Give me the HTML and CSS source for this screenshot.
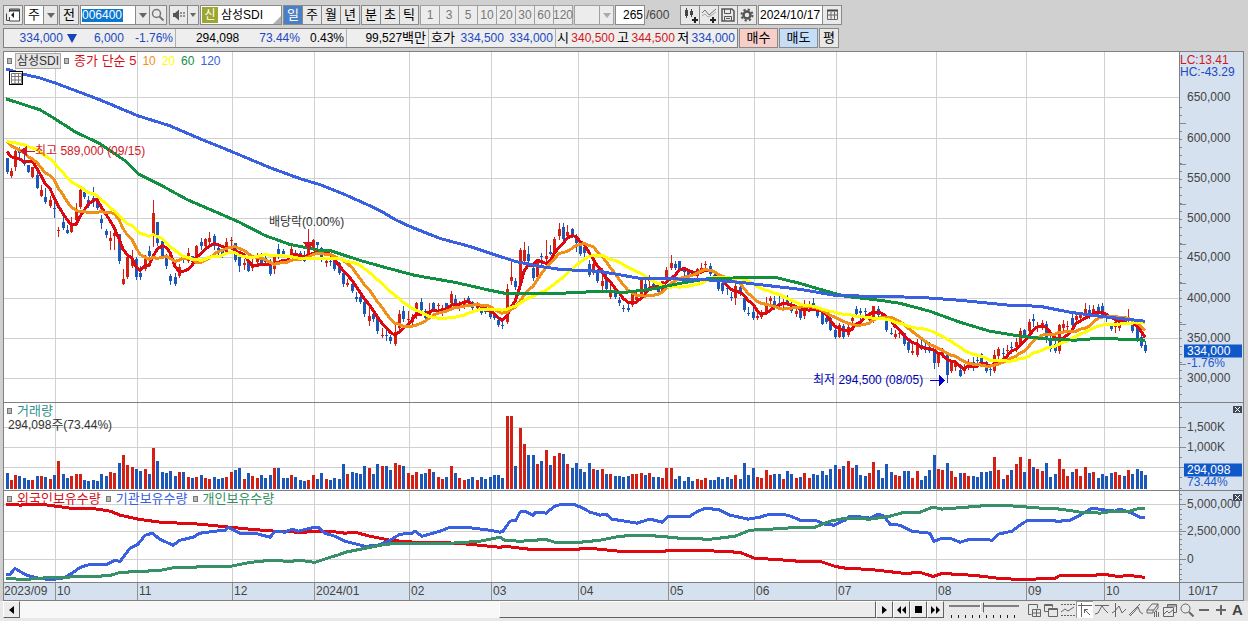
FILE: index.html
```html
<!DOCTYPE html>
<html lang="ko">
<head>
  <meta charset="UTF-8" />
  <meta name="viewport" content="width=device-width, initial-scale=1.0"/>
  <title>삼성SDI - 종합차트</title>
  <link rel="stylesheet" href="styles.css">
</head>
<body>

  <!-- Toolbar -->
  <div class="toolbar">
    <button class="btn" aria-label="패널"><svg width="14" height="14" viewBox="0 0 14 14"><path d="M3.5 4V1h10v12h-10V9" fill="#fff" stroke="#444"/><path d="M3.5 2.5h10" stroke="#444" stroke-width="2"/><path d="M8 4v6L5 7z" fill="#222"/><path d="M0.5 5.5v7h3" fill="none" stroke="#444"/></svg></button>
    <div class="group gap-s">
      <button class="btn white">주</button>
      <button class="btn arrow" aria-label="종목구분"><i class="tri"></i></button>
    </div>
    <button class="btn gap-s">전</button>
    <div class="group gap-s">
      <input type="text" class="code" value="006400" aria-label="종목코드">
      <button class="btn arrow" aria-label="종목 목록"><i class="tri"></i></button>
      <button class="btn search" aria-label="검색"><svg width="14" height="14" viewBox="0 0 14 14" fill="none" stroke="#777"><circle cx="5.5" cy="5.5" r="4" stroke-width="1.5"/><path d="M8.5 8.5l4 4" stroke-width="2"/></svg></button>
    </div>
    <div class="group gap-m">
      <button class="btn speaker" aria-label="소리"><svg width="14" height="12" viewBox="0 0 14 12"><path d="M1 4h2l4-3.5v11L3 8H1z" fill="#555"/><path d="M9 3v6M12 3v6" stroke="#777" stroke-width="1.5" stroke-dasharray="2 1"/></svg></button>
      <button class="btn arrow slim" aria-label="소리 설정"><i class="tri"></i></button>
    </div>
    <div class="stock"><span class="credit">신</span><span>삼성SDI</span><i class="corner"></i></div>
    <div class="group gap-s">
      <button class="btn active">일</button>
      <button class="btn">주</button>
      <button class="btn">월</button>
      <button class="btn">년</button>
    </div>
    <div class="group gap-s">
      <button class="btn">분</button>
      <button class="btn">초</button>
      <button class="btn">틱</button>
    </div>
    <div class="group gap-s">
      <button class="btn" disabled>1</button>
      <button class="btn" disabled>3</button>
      <button class="btn" disabled>5</button>
      <button class="btn" disabled>10</button>
      <button class="btn" disabled>20</button>
      <button class="btn" disabled>30</button>
      <button class="btn" disabled>60</button>
      <button class="btn" disabled>120</button>
    </div>
    <div class="group gap-s">
      <button class="btn unit" disabled aria-label="분 단위"></button>
      <button class="btn arrow" disabled aria-label="분 단위 목록"><i class="tri"></i></button>
    </div>
    <input type="text" class="count" value="265" aria-label="봉 개수">
    <span class="total">/600</span>
    <div class="group tight">
      <button class="btn" aria-label="차트 추가"><svg width="15" height="15" viewBox="0 0 15 15"><path d="M3.5 0v10M8.5 1v8" stroke="#444"/><path d="M2 2h3v6H2zM7 3h3v4H7z" fill="#444"/><path d="M9 12h6M12 9v6" stroke="#222" stroke-width="2"/></svg></button>
      <button class="btn" aria-label="지표 추가"><svg width="15" height="15" viewBox="0 0 15 15" fill="none"><path d="M0 5l3-3 4 5 7-6" stroke="#777"/><path d="M0 8l3-2 3 3 4-2 4-3" stroke="#aaa"/><path d="M8 12h6M11 9v6" stroke="#222" stroke-width="2"/></svg></button>
      <button class="btn" aria-label="저장"><svg width="14" height="14" viewBox="0 0 14 14" fill="none" stroke="#555"><path d="M1 1h10l2 2v10H1z" stroke-width="1.5"/><path d="M3.5 1v4.5h6V1M3.500 13V8.5h7V13M5 10.5h4"/></svg></button>
      <button class="btn" aria-label="설정"><svg width="14" height="14" viewBox="0 0 14 14" fill="none" stroke="#555"><circle cx="7" cy="7" r="3.5" stroke-width="2.5"/><circle cx="7" cy="7" r="5.5" stroke-width="2" stroke-dasharray="2.2 2.12"/></svg></button>
    </div>
    <div class="group gap-s">
      <input type="text" class="date" value="2024/10/17" aria-label="기준일">
      <button class="btn" aria-label="달력"><svg width="13" height="12" viewBox="0 0 13 12" fill="none" stroke="#666"><path d="M1 1.5h11" stroke="#444" stroke-width="2"/><path d="M1.5 2v8.5h10V2M5 3v7M8.5 3v7M2 6h9" /></svg></button>
    </div>
  </div>

  <!-- Quote bar -->
  <div class="quote">
    <div class="cells">
      <div class="cell c1 down"><span>334,000</span><i class="fall"></i><span>6,000</span><span>-1.76%</span></div>
      <div class="cell c2"><span>294,098</span><span class="down">73.44%</span><span>0.43%</span></div>
      <div class="cell c3"><span>99,527<b>백만</b></span></div>
      <div class="cell c4"><b>호가</b><span class="down">334,500</span><span class="down">334,000</span></div>
      <div class="cell c5"><b>시</b><span class="up">340,500</span><b>고</b><span class="up">344,500</span><b>저</b><span class="down">334,000</span></div>
    </div>
    <button class="btn buy">매수</button>
    <button class="btn sell">매도</button>
    <button class="btn avg">평</button>
  </div>

  <!-- Charts -->
  <div class="charts">
    <div class="panel price">
      <div class="plot">
        <svg id="priceChart" viewBox="4 52 1175 351" preserveAspectRatio="none"></svg>
        <div class="legend">
          <i class="box"></i><span class="name">삼성SDI</span><i class="box"></i>
          <span class="ma5">종가 단순 5</span><span class="ma10">10</span><span class="ma20">20</span><span class="ma60">60</span><span class="ma120">120</span>
        </div>
        <button class="grid-btn" aria-label="수치조회"><svg width="11" height="11" viewBox="0 0 11 11" fill="none" stroke="#777"><path d="M.5.5h10v10H.5zM.5 3.5h10M.5 7h10M4 .5v10M7.5.5v10"/></svg></button>
        <div id="priceNotes"></div>
      </div>
      <div class="axis" id="priceAxis">
        <div class="range"><span class="up">LC:13.41</span><span class="down">HC:-43.29</span></div>
      </div>
    </div>

    <div class="panel volume">
      <div class="plot">
        <svg id="volumeChart" viewBox="4 404 1175 86" preserveAspectRatio="none"></svg>
        <div class="legend"><i class="box"></i><span class="vol-name">거래량</span></div>
        <div class="vol-now">294,098<b>주</b>(73.44%)</div>
      </div>
      <div class="axis" id="volumeAxis"><button class="close" aria-label="거래량 닫기"><svg width="5" height="5" viewBox="0 0 5 5" stroke="#fff"><path d="M0 0l5 5M5 0L0 5"/></svg></button></div>
    </div>

    <div class="panel holding">
      <div class="plot">
        <svg id="holdingChart" viewBox="4 491 1175 91" preserveAspectRatio="none"></svg>
        <div class="legend">
          <i class="box"></i><span class="foreign">외국인보유수량</span>
          <i class="box"></i><span class="inst">기관보유수량</span>
          <i class="box"></i><span class="person">개인보유수량</span>
        </div>
      </div>
      <div class="axis" id="holdingAxis"><button class="close" aria-label="보유수량 닫기"><svg width="5" height="5" viewBox="0 0 5 5" stroke="#fff"><path d="M0 0l5 5M5 0L0 5"/></svg></button></div>
    </div>

    <div class="dates">
      <div class="months" id="months"></div>
      <div class="last">10/17</div>
    </div>
  </div>

  <!-- Scroll bar and drawing tools -->
  <div class="bottom">
    <button class="scroll-btn" aria-label="왼쪽"><svg width="5" height="8" viewBox="0 0 5 8"><path d="M5 0v8L0 4z"/></svg></button>
    <div class="track"><div class="thumb"></div></div>
    <button class="scroll-btn" aria-label="오른쪽"><svg width="5" height="8" viewBox="0 0 5 8"><path d="M0 0v8l5-4z"/></svg></button>
    <button class="scroll-btn" aria-label="뒤로"><svg width="9" height="8" viewBox="0 0 9 8"><path d="M4 0v8L0 4zM9 0v8L5 4z"/></svg></button>
    <button class="scroll-btn" aria-label="정지"><svg width="7" height="7" viewBox="0 0 7 7"><path d="M0 0h7v7H0z"/></svg></button>
    <button class="scroll-btn" aria-label="앞으로"><svg width="9" height="8" viewBox="0 0 9 8"><path d="M0 0v8l4-4zM5 0v8l4-4z"/></svg></button>
    <input type="range" class="speed" min="0" max="100" value="47" aria-label="속도">
    <div class="tools">
      <button aria-label="창 추가"><svg viewBox="0 0 14 14"><path d="M4.5 11.5h-3v-10h9v4"/><path d="M5.500 6.500h8v7h-8zM5.500 10h8M9.500 6.500v7"/></svg></button>
      <button aria-label="창 겹치기"><svg viewBox="0 0 14 14"><path d="M4.500 8.500h-4v-7h8v3"/><path d="M4.500 5.500h9v8h-9z"/><path d="M5 6.500h8M1 2.500h8"/></svg></button>
      <button aria-label="영역"><svg viewBox="0 0 14 14"><path d="M0 1.500h14M0 12.500h14" stroke-dasharray="2 1"/><path d="M0 9l4-3 3 2 6-4"/></svg></button>
      <button class="on" aria-label="십자선"><svg viewBox="0 0 14 14"><path d="M0 2.500h14M3.500 0v14M6 6l6 6M6.500 10V6.500H10"/></svg></button>
      <button aria-label="수평선"><svg viewBox="0 0 14 14"><path d="M0 2.500h14M0 11l3-1 4-7 3 4 3 3"/></svg></button>
      <button aria-label="수직선"><svg viewBox="0 0 14 14"><path d="M3.500 0v14M0 10l3-2 4-5 3 7 4-4"/></svg></button>
      <button aria-label="추세선"><svg viewBox="0 0 14 14"><path d="M0 12L11 1M1 13l5-5 3-4 2 5 3 2"/></svg></button>
      <button aria-label="지우개"><svg viewBox="0 0 14 14"><path d="M1 7l5-6h6L8 7zM1 7v3h6V7M8 10l4-5V1M8.500 9v5M10.500 8v6M12.500 9v5"/></svg></button>
      <button aria-label="차트 복사"><svg viewBox="0 0 14 14"><path d="M4.500 4V1.500h9v8h-3M4 3h9"/><path d="M.5 4.500h10v9H.5zM1 11l3-3 2 2 4-3"/></svg></button>
      <button aria-label="돋보기"><svg viewBox="0 0 14 14"><circle cx="5.500" cy="5.500" r="4.500"/><path d="M9 9l4.500 4.500" stroke-width="2"/></svg></button>
      <button aria-label="축소"><svg viewBox="0 0 14 14"><path d="M2 7h10" stroke-width="2"/></svg></button>
      <button aria-label="확대"><svg viewBox="0 0 14 14"><path d="M2 7h10M7 2v10" stroke-width="2"/></svg></button>
      <button class="letter">A</button>
    </div>
  </div>

  <script src="script.js"></script>
</body>
</html>
```
FILE: styles.css
```css
* {
  box-sizing: border-box;
}

body {
  margin: 0;
  height: 100vh;
  display: flex;
  flex-direction: column;
  background: #d0d0d0;
  color: #000;
  font: 12px/16px "Liberation Sans", "Noto Sans CJK KR", sans-serif;
  white-space: nowrap;
  overflow: hidden;
}

button,
input {
  font: inherit;
  color: inherit;
  margin: 0;
  padding: 0;
  border-radius: 0;
}

i,
b {
  font-style: normal;
  font-weight: normal;
}

/* toolbar */
.toolbar {
  display: flex;
  align-items: center;
  height: 20px;
  margin: 5px 0 3px 3px;
}

.group {
  display: flex;
}

.btn {
  display: flex;
  align-items: center;
  justify-content: center;
  width: 20px;
  height: 20px;
  border: 1px solid #8a8a8a;
  background: #e9e9e9;
}

.group > * + * {
  margin-left: -1px;
}

.gap-s {
  margin-left: 1px;
}

.gap-m {
  margin-left: 2px;
}

.white {
  background: #fff;
}

.arrow {
  width: 15px;
}

.slim {
  width: 12px;
}

.search {
  width: 18px;
}

.speaker {
  width: 19px;
}

.tri {
  border: 4px solid transparent;
  border-top: 5px solid #666;
  border-bottom: 0;
}

.slim .tri {
  border-width: 4px 3px 0;
}

.code,
.count,
.date {
  height: 20px;
  border: 1px solid #8a8a8a;
  background: #fff;
}

.code {
  width: 56px;
  padding-left: 1px;
  color: #fff;
  background: linear-gradient(#0a78d0, #0a78d0) 1px 3px / 41px 13px no-repeat #fff;
}

.stock {
  position: relative;
  display: flex;
  align-items: center;
  gap: 3px;
  width: 82px;
  height: 20px;
  margin-left: 1px;
  padding-left: 1px;
  border: 1px solid #8a8a8a;
  background: #fff;
}

.credit {
  width: 16px;
  height: 16px;
  background: #9da630;
  color: #fff;
  text-align: center;
}

.corner {
  position: absolute;
  right: 0;
  bottom: 0;
  border: 4px solid #b0b0b0;
  border-top-color: transparent;
  border-left-color: transparent;
}

.active {
  background: #4a7fc4;
  color: #fff;
}

.btn:disabled {
  color: #777;
  background: #ececec;
  border-color: #a0a0a0;
}

.btn:disabled .tri {
  border-top-color: #aaa;
}

.unit {
  width: 26px;
}

.count {
  width: 30px;
  margin-left: 1px;
  padding-right: 1px;
  text-align: right;
}

.total {
  width: 35px;
  padding-left: 1px;
  color: #444;
}

.date {
  width: 65px;
  padding-left: 1px;
}

/* quote bar */
.quote {
  display: flex;
  height: 20px;
  margin: 0 0 3px 3px;
}

.cells {
  display: flex;
  border: 1px solid #808080;
  background: #eee;
  margin-right: 1px;
}

.cell {
  display: flex;
  align-items: center;
  justify-content: flex-end;
  padding-right: 2px;
  border-right: 1px solid #b0b0b0;
}

.cell b,
.vol-now b,
.quote .btn,
.toolbar .btn:not(:disabled) {
  font-size: 13px;
}

.cell:last-child {
  border-right: 0;
}

.c1 {
  width: 172px;
}

.fall {
  margin: 0 17px 0 4px;
  border: 5px solid transparent;
  border-top: 9px solid #1845b8;
  border-bottom: 0;
}

.c1 span:last-child {
  margin-left: 11px;
}

.c2 {
  width: 171px;
  gap: 10px;
}

.c2 .down {
  margin-left: 10px;
}

.c3 {
  width: 82px;
}

.c4 {
  width: 127px;
  justify-content: space-between;
  padding-left: 2px;
}

.c5 {
  width: 181px;
  justify-content: space-between;
  padding-left: 1px;
}

.up {
  color: #d01818;
}

.down {
  color: #1c48c0;
}

.quote .buy,
.quote .sell {
  width: 39px;
  margin-right: 1px;
}

.buy {
  background: #f8cfc8;
}

.sell {
  background: #c4def8;
}

/* charts */
.charts {
  flex: 1;
  min-height: 0;
  display: flex;
  flex-direction: column;
  margin: 0 4px 0 3px;
  border: 1px solid #808080;
  background: #fff;
}

.panel {
  display: flex;
  min-height: 0;
  border-bottom: 1px solid #808080;
}

.price {
  flex: 352 1 0;
}

.volume {
  flex: 87 1 0;
}

.holding {
  flex: 92 1 0;
}

.plot {
  position: relative;
  flex: 1;
  min-width: 0;
}

.plot > svg {
  position: absolute;
  width: 100%;
  height: 100%;
  shape-rendering: crispEdges;
}

.axis {
  position: relative;
  width: 64px;
  border-left: 1px solid #808080;
  background: #d6e1ef;
  color: #444;
}

.axis > svg {
  position: absolute;
  width: 8px;
  height: 100%;
  shape-rendering: crispEdges;
}

.axis-label,
.tag,
.change {
  position: absolute;
  left: 7px;
  line-height: 12px;
  transform: translateY(-50%);
}

.tag {
  left: 4px;
  right: 1px;
  padding-left: 3px;
  line-height: 13px;
  background: #1058c8;
  color: #fff;
}

.change {
  color: #1c58c8;
}

.range {
  display: flex;
  flex-direction: column;
  line-height: 12px;
  padding-top: 2px;
}

.close {
  position: absolute;
  top: 3px;
  right: 1px;
  z-index: 1;
  display: flex;
  align-items: center;
  justify-content: center;
  width: 9px;
  height: 7px;
  border: 0;
  background: #404858;
}

.legend {
  position: absolute;
  top: 1px;
  left: 3px;
  display: flex;
  align-items: center;
  gap: 5px;
  font-size: 13px;
  line-height: 14px;
}

.box {
  width: 5px;
  height: 6px;
  border: 1px solid #777;
  background: #bbb;
}

.name {
  margin: 0 -2px;
  padding: 0 1px;
  border: 1px solid #aaa;
  background: #e4e4e4;
  color: #333;
  font-size: 12px;
}

.ma5,
.foreign {
  color: #d80c18;
}

.ma10,
.ma20,
.ma60,
.ma120 {
  margin-left: 1px;
  font-size: 12px;
}

.ma10 {
  color: #f09018;
}

.ma20 {
  color: #ffff00;
}

.ma60 {
  color: #109040;
}

.ma120 {
  color: #3860e0;
}

.vol-name {
  color: #309090;
}

.inst {
  color: #3860e0;
}

.person {
  color: #309060;
}

.vol-now {
  position: absolute;
  top: 14px;
  left: 4px;
  color: #333;
}

.grid-btn {
  position: absolute;
  top: 19px;
  left: 5px;
  display: flex;
  align-items: center;
  justify-content: center;
  width: 14px;
  height: 14px;
  border: 1px solid #000;
  background: #fff;
}

.note {
  position: absolute;
  transform: translateY(-50%);
}

.high {
  color: #d01828;
}

.low {
  color: #0000b0;
}

.dividend {
  color: #333;
}

.dates {
  display: flex;
  height: 17px;
  background: #d6e1ef;
  color: #444;
}

.months {
  position: relative;
  flex: 1;
}

.month {
  position: absolute;
  height: 17px;
  padding-left: 1px;
  border-left: 1px solid #909090;
}

.month:first-child {
  padding-left: 0;
  border-left: 0;
}

.last {
  width: 64px;
  padding-left: 8px;
  border-left: 1px solid #808080;
}

/* bottom bar */
.bottom {
  display: flex;
  height: 20px;
  padding: 0 2px 3px 3px;
  background: #e8e8e8;
}

.scroll-btn {
  display: flex;
  align-items: center;
  justify-content: center;
  width: 17px;
  height: 17px;
  border: 1px solid #fff;
  border-right-color: #606060;
  border-bottom-color: #606060;
  background: #ececec;
}

.track {
  flex: 1;
  display: flex;
  justify-content: flex-end;
  background: #f8f8f8;
}

.thumb {
  width: 44%;
  border: 1px solid #fff;
  border-right-color: #606060;
  border-bottom-color: #606060;
  background: #ececec;
}

.speed {
  appearance: none;
  width: 70px;
  height: 17px;
  margin: 0 6px 0 5px;
  background:
    linear-gradient(#808080, #808080) 0 4px / 100% 2px no-repeat,
    repeating-linear-gradient(90deg, transparent 0 2px, #222 2px 3px, transparent 3px 7px) 0 14px / 100% 3px no-repeat;
}

.speed::-webkit-slider-thumb {
  appearance: none;
  width: 4px;
  height: 11px;
  margin-top: -5px;
  border: 1px solid #fff;
  border-right-color: #606060;
  background: #ddd;
}

.tools {
  display: flex;
}

.tools button {
  display: flex;
  align-items: center;
  justify-content: center;
  width: 17px;
  height: 17px;
  border: 0;
  background: none;
}

.tools svg {
  flex: none;
  width: 14px;
  height: 14px;
  fill: none;
  stroke: #666;
}

.tools .on {
  background: #fff;
  border: 1px solid #999;
  border-right: 0;
  border-bottom: 0;
}

.tools .letter {
  color: #444;
  font: bold 15px/17px "Liberation Sans", sans-serif;
}
```
FILE: script.js
```js
const NS = 'http://www.w3.org/2000/svg';
const RED = '#d42014';
const BLUE = '#1c58b8';

// [direction, high, body top, body bottom, low] for every daily bar
const bars = `
b158,158,172,173 r168,171,176,177 r150,151,167,170 b147,151,153,156 b155,160,164,165 b165,165,172,172 r167,167,177,177 b173,175,188,188
r185,190,196,196 b188,197,202,203 r196,200,206,207 b202,208,209,217 r227,231,232,237 b217,222,228,230 b225,230,234,234 r217,223,233,233
r203,209,220,221 r188,190,207,208 b189,192,197,198 b196,200,206,207 b187,198,201,206 b197,200,208,209 b215,219,223,228 b229,232,236,238
r232,239,242,250 r229,234,237,250 b235,235,262,264 r270,280,285,285 r257,258,278,279 r251,259,267,268 b258,260,278,280 b267,274,278,280
r256,258,270,271 b247,252,257,258 r200,213,236,247 b222,222,244,246 b239,242,257,258 b255,257,267,269 b275,277,282,285 b274,278,285,286
r265,268,277,278 b257,259,260,263 r249,254,262,263 b257,257,263,263 r246,247,263,263 b239,243,247,250 r239,240,247,249 r233,239,243,248
b235,237,247,250 b246,249,254,256 b250,252,255,258 r239,243,254,255 r238,241,242,250 b244,244,261,262 b256,258,267,272 r260,264,266,270
b262,263,272,272 r260,265,269,271 r254,260,263,265 b254,259,264,266 b257,259,263,266 b260,264,275,276 r258,258,270,274 b245,250,255,259
b250,252,256,257 b256,258,259,261 r247,250,256,256 b251,255,257,260 b252,254,259,260 b252,256,262,262 r248,250,259,260 r240,241,250,251
b243,243,246,248 b248,249,261,262 r259,262,264,267 b258,262,263,266 b260,262,270,271 b263,264,274,275 b272,274,285,287 r280,284,286,287
b284,285,292,293 b293,298,300,302 b295,298,303,304 b301,303,315,317 r309,317,322,326 b313,315,320,322 b318,319,332,334 r329,336,337,338
b328,336,337,341 b336,338,342,344 r325,333,345,346 r311,315,329,330 b307,312,320,322 r312,320,321,323 r315,318,323,326 r303,304,317,319
b299,303,311,312 b310,312,319,320 r304,312,317,318 b303,304,311,312 r304,306,307,312 r306,309,312,316 b304,304,310,311 r292,295,304,305
b296,300,304,305 r302,305,307,311 r299,303,307,309 b297,299,304,305 b302,303,309,310 r303,306,309,312 b306,308,314,315 b308,308,313,314
b310,312,318,319 b313,315,319,320 b319,321,326,327 b322,326,327,329 r285,290,323,324 r263,278,282,285 b279,282,288,290 r249,251,283,285
r243,251,262,265 b247,255,262,264 b264,269,279,281 r261,262,278,279 b254,257,258,268 r241,257,260,264 b246,253,255,255 r238,240,254,256
r223,229,237,240 b223,227,240,242 r225,233,237,240 b228,229,237,238 b235,237,244,252 b242,243,255,256 b243,248,254,257 b261,265,276,277
r259,265,274,275 b270,272,282,283 r269,282,287,293 b275,278,290,292 r286,292,298,299 b287,292,298,299 b298,301,304,306 b306,309,310,312
b304,309,311,312 r293,294,306,307 r290,297,301,303 r281,281,296,298 b280,285,293,295 r276,280,282,287 b280,285,287,289 b285,288,293,294
r282,282,292,294 r268,271,281,283 r256,264,269,270 b262,265,269,270 b262,262,270,272 b268,270,273,276 b271,271,277,278 b271,273,275,277
r269,270,277,282 r264,269,272,274 r262,265,266,271 b264,267,275,276 b273,276,281,282 b281,283,290,291 b281,284,292,294 b285,289,290,295
b293,298,299,301 r284,287,299,305 b286,288,295,296 b297,299,311,312 b308,314,315,316 b309,313,319,320 r312,317,319,320 r311,314,318,319
r298,305,314,315 r297,299,302,306 b297,302,306,310 b296,304,306,309 r300,303,306,308 b296,299,304,306 b303,305,312,313 r308,312,315,317
b309,311,319,320 r301,305,317,319 r302,305,308,310 b299,304,307,308 b309,310,317,318 b312,313,325,325 b314,319,323,324 b317,319,331,331
b328,331,338,339 r324,326,338,338 b325,327,338,339 r323,328,336,337 r318,319,322,325 b307,310,315,317 b309,312,314,321 b309,312,313,315
r314,316,321,324 r307,307,318,323 b307,310,316,317 b314,315,317,320 b317,317,331,332 b329,334,335,335 r331,335,338,339 r331,334,335,338
b334,334,345,346 b342,343,351,353 r343,352,354,355 r340,344,356,357 b341,346,348,350 b344,348,349,353 b343,348,352,353 b350,351,364,369
r354,355,364,367 r349,353,356,358 b353,354,376,383 r363,364,372,373 r362,363,368,371 b365,371,377,377 r365,368,372,374 r360,364,368,370
b358,363,365,371 b357,361,362,366 b354,355,363,364 b362,363,372,373 b368,370,371,376 r351,356,372,373 r348,350,357,359 b349,354,355,358
r346,351,352,356 b343,348,349,354 r339,343,348,352 r329,332,345,347 b330,331,336,338 r320,323,332,337 b315,320,322,327 r323,328,329,332
r321,324,327,330 b322,325,341,343 b335,341,350,352 b340,345,352,353 r325,326,352,354 r321,325,329,333 r322,327,328,333 b315,319,326,328
r313,317,321,324 r313,315,319,321 r304,310,317,319 b306,311,318,319 r306,310,314,316 b305,308,313,318 b304,307,316,318 b314,318,319,322
b324,326,330,331 r317,323,328,333 r320,322,329,331 b317,318,323,324 r310,320,321,324 b325,325,332,333 b328,328,339,342 b335,338,347,348
b342,346,352,353`.trim().split(/\s+/).map(s => [s[0], ...s.slice(1).split(',').map(Number)]);

const volumes = [
  15,8,13,12,10,8,8,12,12,11,9,13,27,14,10,12,14,14,8,7,8,7,14,12,16,15,25,33,23,21,
  19,17,19,14,40,27,16,15,17,12,16,16,11,10,11,13,10,9,11,9,10,11,16,18,20,9,15,12,10,13,
  10,13,20,20,10,10,13,11,8,7,8,13,9,15,9,8,10,9,24,14,16,15,14,22,20,14,24,22,22,18,
  25,23,22,15,13,16,14,15,19,16,11,9,11,22,15,10,8,9,11,8,11,9,11,13,13,10,72,72,22,60,
  44,33,33,24,27,38,23,32,35,34,24,20,25,19,16,25,19,18,19,14,14,12,12,11,12,14,14,15,13,15,
  11,11,10,20,20,9,12,7,11,7,9,8,10,8,8,11,9,11,9,13,9,25,13,20,11,10,18,13,14,14,
  9,17,14,10,11,15,10,14,13,17,13,19,23,19,22,27,20,23,13,12,15,26,18,10,24,16,13,12,17,17,
  10,17,8,12,18,33,19,18,25,17,11,15,15,12,12,11,16,16,17,31,18,9,13,18,24,31,16,29,21,19,
  17,25,11,14,29,19,12,16,19,12,21,15,16,10,14,12,15,16,13,12,18,14,19,17,13
];

const ma60 = '6,99 40,110 55,119 75,132 100,144 125,161 138,174 160,185 187,200 215,212 240,223 265,236 290,245 320,251 330,251 360,261 385,268 415,276 455,283 490,291 505,294 560,294 600,292 625,293 650,290 680,284 710,279 775,278 800,284 820,290 845,297 880,301 900,304 930,312 960,323 990,332 1020,337 1050,340 1075,341 1100,339 1145,341';
const ma120 = '6,69 22,74 40,78 55,83 100,100 138,116 170,126 200,139 232,152 270,168 300,179 320,185 345,195 365,204 380,211 395,220 410,227 440,239 470,247 500,257 515,262 540,267 560,270 600,272 640,279 700,280 740,283 800,290 835,296 870,297 920,298 960,301 1010,306 1040,307 1070,313 1100,317 1145,322';

const foreign = '6,504 20,505 40,504 55,506 70,508 90,508 110,511 120,515 138,519 160,522 200,524 230,527 250,529 275,531 300,532 330,531 345,533 355,532 370,536 390,540 415,542 440,542 470,544 500,547 505,546 530,549 560,549 575,549 590,548 620,551 650,551 700,550 740,552 755,558 775,559 800,561 820,561 835,566 847,568 870,569 905,573 920,572 933,576 942,573 975,575 1000,578 1020,579 1055,578 1060,575 1090,575 1105,574 1118,576 1130,575 1145,577';
const inst = '6,574 10,574 15,568 20,571 27,575 40,578 50,579 62,578 72,573 80,567 90,564 107,564 115,560 120,561 130,548 138,544 145,535 152,533 160,539 173,545 180,540 193,537 200,533 215,531 225,530 228,527 240,533 255,533 270,537 275,531 285,532 292,529 298,531 310,528 318,527 325,533 335,536 345,541 365,546 378,545 390,540 400,534 412,533 415,531 422,536 440,531 450,527 465,527 490,530 500,532 503,531 510,521 516,520 520,512 525,511 533,515 536,512 546,513 555,506 563,504 573,504 583,508 590,512 600,515 606,514 612,519 625,521 637,523 650,519 662,522 668,516 690,516 698,511 706,508 720,510 730,515 748,519 760,517 770,514 788,515 800,520 815,520 825,524 834,525 845,520 850,516 862,517 870,518 878,514 884,516 890,524 900,525 912,531 930,533 934,541 942,538 950,538 960,542 970,539 985,539 992,540 998,534 1012,531 1020,525 1028,520 1060,521 1070,520 1080,515 1092,508 1105,510 1115,511 1120,509 1132,513 1140,517 1145,517';
const person = '6,578 25,579 50,577 95,576 110,575 120,572 160,570 175,567 230,566 250,562 270,560 290,561 300,560 315,562 330,557 340,554 345,552 360,549 380,545 395,543 450,543 480,541 500,537 505,540 520,541 535,540 545,539 555,542 580,542 600,540 620,536 640,535 660,536 680,538 710,539 735,536 750,530 770,529 800,527 815,527 830,521 845,518 870,519 890,516 905,512 920,512 933,507 942,509 955,508 980,506 990,505 1015,506 1040,508 1060,509 1080,512 1100,513 1115,511 1130,511 1140,508 1145,508';

const months = [
  [4, '2023/09'], [55, '10'], [137, '11'], [232, '12'], [314, '2024/01'], [409, '02'], [491, '03'],
  [578, '04'], [668, '05'], [754, '06'], [836, '07'], [936, '08'], [1026, '09'], [1104, '10']
];

const panels = {
  price: { top: 52, height: 351, step: 8, labels: [[97, '650,000'], [138, '600,000'], [178, '550,000'], [218, '500,000'], [258, '450,000'], [299, '400,000'], [339, '350,000'], [379, '300,000']], tag: [352, '334,000'], change: [364, '-1.76%'] },
  volume: { top: 404, height: 86, step: 10, labels: [[428, '1,500K'], [448, '1,000K'], [468, '']], tag: [471, '294,098'], change: [483, '73.44%'] },
  holding: { top: 491, height: 91, step: 5, labels: [[504, '5,000,000'], [531, '2,500,000'], [559, '0']] }
};

const barX = i => Math.round(6.5 + i * 4.313);

function add(parent, name, attrs) {
  const el = document.createElementNS(NS, name);
  for (const key in attrs) el.setAttribute(key, attrs[key]);
  parent.appendChild(el);
  return el;
}

function line(svg, points, color, width = 3) {
  add(svg, 'polyline', { points, fill: 'none', stroke: color, 'stroke-width': width, 'stroke-linejoin': 'round' });
}

function label(parent, className, text, style) {
  const el = document.createElement('span');
  el.className = className;
  el.textContent = text;
  Object.assign(el.style, style);
  parent.appendChild(el);
}

function drawGrid(svg, panel) {
  months.slice(1).forEach(([x]) => add(svg, 'rect', { x, y: panel.top, width: 1, height: panel.height, fill: '#d0d0d0' }));
  panel.labels.forEach(([y]) => add(svg, 'rect', { x: 4, y, width: 1175, height: 1, fill: '#d0d0d0' }));
}

function drawAxis(id, panel) {
  const axis = document.getElementById(id);
  const svg = add(axis, 'svg', { viewBox: `0 ${panel.top} 8 ${panel.height}`, preserveAspectRatio: 'none' });
  const pct = y => (y - panel.top) / panel.height * 100 + '%';
  for (let y = panel.labels[0][0] - panel.step * 2; y < panel.top + panel.height; y += panel.step) {
    add(svg, 'rect', { x: 0, y, width: 2, height: 1, fill: '#888' });
  }
  panel.labels.forEach(([y, text]) => {
    add(svg, 'rect', { x: 0, y, width: 6, height: 1, fill: '#888' });
    label(axis, 'axis-label', text, { top: pct(y) });
  });
  if (panel.tag) {
    label(axis, 'tag', panel.tag[1], { top: pct(panel.tag[0]) });
    label(axis, 'change', panel.change[1], { top: pct(panel.change[0]) });
  }
}

// closes before the first visible bar, so the averages start at the left edge
const closes = [...Array(10).fill(140), ...Array(5).fill(132), ...Array(4).fill(147),
  ...bars.map(b => b[0] === 'r' ? b[2] : b[3])];

function average(n) {
  return bars.map((b, i) => {
    const part = closes.slice(i + 20 - n, i + 20);
    return barX(i) + ',' + Math.round(part.reduce((sum, v) => sum + v, 0) / n);
  }).join(' ');
}

const price = document.getElementById('priceChart');
drawGrid(price, panels.price);
bars.forEach(([dir, high, top, bottom, low], i) => {
  const x = barX(i);
  const fill = dir === 'r' ? RED : BLUE;
  add(price, 'rect', { x, y: high, width: 1, height: low - high + 1, fill });
  add(price, 'rect', { x: x - 1, y: top, width: 3, height: Math.max(bottom - top, 1), fill });
});
line(price, average(5), '#e00810');
line(price, average(10), '#f09018');
line(price, average(20), '#ffff00');
line(price, ma60, '#109040');
line(price, ma120, '#3860e0');

// arrows of the three notes
add(price, 'path', { d: 'M20 151l7-5v11zM27 151h8v1h-8z', fill: '#d01828' });
add(price, 'path', { d: 'M308 229h1v14h5l-5 8-6-8h5z', fill: '#d01828' });
add(price, 'path', { d: 'M930 381h9v-5l6 5-6 6v-5h-9z', fill: '#0000d0' });

const notes = document.getElementById('priceNotes');
[[35, 151, 'high', '최고 589,000 (09/15)'], [269, 222, 'dividend', '배당락(0.00%)'], [813, 381, 'low', '최저 294,500 (08/05)']]
  .forEach(([x, y, name, text]) => label(notes, 'note ' + name, text, {
    left: (x - 4) / 1175 * 100 + '%',
    top: (y - 52) / 351 * 100 + '%'
  }));

const volume = document.getElementById('volumeChart');
drawGrid(volume, panels.volume);
volumes.forEach((h, i) => add(volume, 'rect', {
  x: barX(i) - 1, y: 489 - h, width: 3, height: h, fill: bars[i][0] === 'r' ? RED : BLUE
}));

const holding = document.getElementById('holdingChart');
drawGrid(holding, panels.holding);
line(holding, foreign, '#e00810');
line(holding, inst, '#3860e0');
line(holding, person, '#389068');

drawAxis('priceAxis', panels.price);
drawAxis('volumeAxis', panels.volume);
drawAxis('holdingAxis', panels.holding);

months.forEach(([x, text]) => label(document.getElementById('months'), 'month', text, {
  left: (x - 4) / 1175 * 100 + '%'
}));
```
